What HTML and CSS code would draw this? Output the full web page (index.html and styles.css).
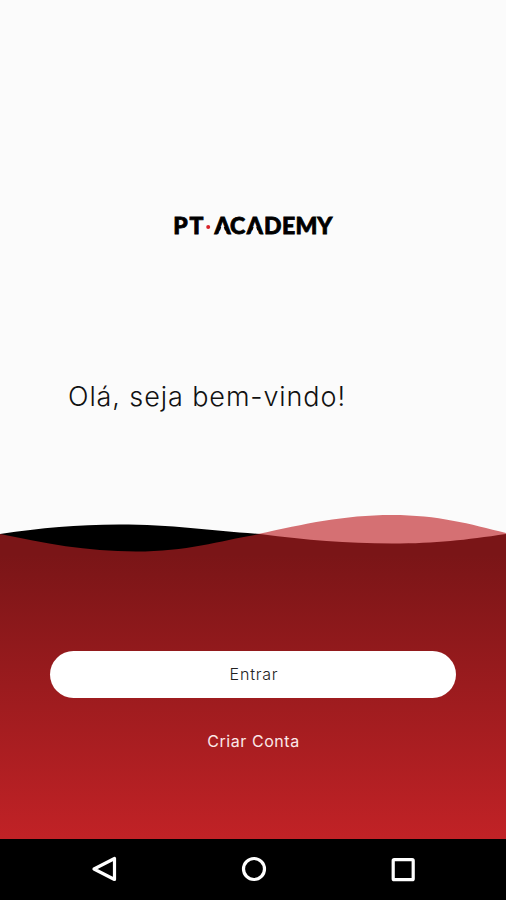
FILE: index.html
```html
<!DOCTYPE html>
<html lang="pt">
<head>
  <meta charset="UTF-8">
  <meta name="viewport" content="width=device-width, initial-scale=1.0">
  <title>PT Academy</title>
  <link rel="stylesheet" href="styles.css">
</head>
<body>

<main class="welcome">
  <svg class="logo" width="184" height="44" viewBox="-10 -10 184 44">
    <text class="logo-text" x="2.2 18.6" y="21">PT</text>
    <circle cx="37.2" cy="14" r="2" fill="#d8232a"/>
    <text class="logo-text" x="43.4 59 75.8 93 111 124.4 146.2" y="21">ACADEMY</text>
    <!-- open the crossbars of both A's -->
    <path class="logo-gap" d="M51.5 10.5l4.2 12h-8.4zM83.9 10.5l4.2 12h-8.4z"/>
  </svg>
  <h1 class="greeting">Olá, seja bem-vindo!</h1>
</main>

<section class="actions">
  <svg class="wave" width="506" height="44" viewBox="0 0 506 44">
    <path fill="#d57073" d="M258 23C305 13 343 4 392 4C438 4 470 13 506 22V36H258Z"/>
    <path fill="#000" d="M0 23C42 17 76 13.5 119 13.5C173 13.5 214 20 260 23V43H0Z"/>
    <path fill="#7a1517" d="M0 23C44 32 86 40.5 136 40.5C188 40.5 222 29 260 23C308 29 345 32.5 392 32.5C437 32.5 465 29 506 23V44H0Z"/>
  </svg>
  <button class="login-btn">Entrar</button>
  <a class="signup-link" href="#">Criar Conta</a>
</section>

<nav class="nav-bar">
  <svg class="nav-icon" width="30" height="30" viewBox="0 0 30 30">
    <path d="M25.5 4.5v21L5 15z"/>
  </svg>
  <svg class="nav-icon" width="30" height="30" viewBox="0 0 30 30">
    <circle cx="15" cy="15" r="10.5"/>
  </svg>
  <svg class="nav-icon" width="30" height="30" viewBox="0 0 30 30">
    <rect x="4.2" y="5.7" width="20" height="20" rx="1"/>
  </svg>
</nav>

</body>
</html>
```

FILE: styles.css
```css
* {
  margin: 0;
  padding: 0;
  box-sizing: border-box;
}

body {
  font-family: Inter, sans-serif;
  background-color: #fbfbfb;
  height: 100vh;
  display: flex;
  flex-direction: column;
  overflow: hidden;
}

.welcome {
  height: 511px;
  padding-top: 203px;
  flex-shrink: 0;
}

.logo {
  display: block;
  margin: 0 auto;
}

.logo-text {
  font-family: Lato, sans-serif;
  font-size: 23px;
  font-weight: 900;
  fill: #000;
  stroke: #000;
  stroke-width: 0.8;
}

.logo-gap {
  fill: #fbfbfb;
}

.greeting {
  margin: 132px 0 0 68px;
  font-size: 27px;
  line-height: 36px;
  font-weight: 300;
  letter-spacing: 0.9px;
  color: #111;
  white-space: nowrap;
}

.actions {
  height: 328px;
  flex-shrink: 0;
  display: flex;
  flex-direction: column;
  align-items: center;
  background: linear-gradient(#fbfbfb 43px, #7a1517 43px, #c12226);
}

.wave {
  display: block;
  flex-shrink: 0;
}

.login-btn {
  width: 406px;
  height: 47px;
  margin-top: 96px;
  padding: 0 0 2px 2px;
  border: none;
  border-radius: 24px;
  background-color: #fff;
  font-family: inherit;
  font-size: 16px;
  font-weight: 300;
  letter-spacing: 0.8px;
  color: #222;
  cursor: pointer;
}

.signup-link {
  margin: 33px 0 0 1px;
  font-size: 16px;
  line-height: 20px;
  letter-spacing: 0.55px;
  color: #fbe9e9;
  text-decoration: none;
}

/* Android navigation bar */
.nav-bar {
  height: 61px;
  padding: 0 87px 2px 89px;
  flex-shrink: 0;
  display: flex;
  justify-content: space-between;
  align-items: center;
  background-color: #000;
}

.nav-icon {
  fill: none;
  stroke: #fff;
  stroke-width: 3.2;
  stroke-linejoin: round;
}
```
